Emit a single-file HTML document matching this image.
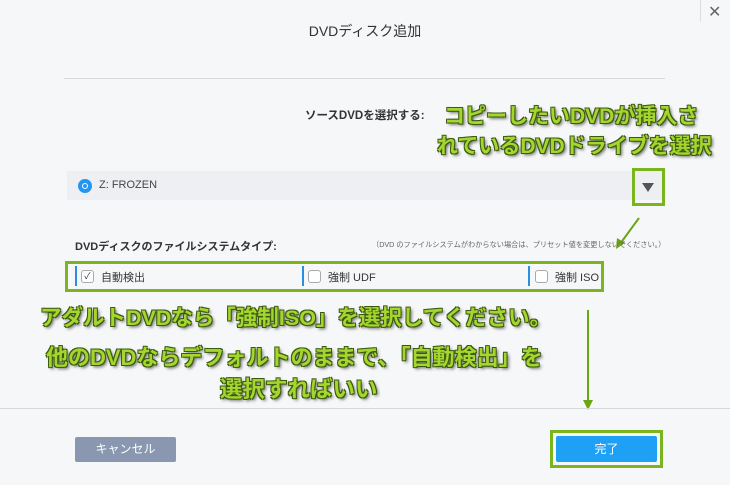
<!DOCTYPE html>
<html><head><meta charset="utf-8"><style>
body{margin:0;width:730px;height:485px;background:#f6f7f9;position:relative;overflow:hidden;font-family:"Liberation Sans","Noto Sans CJK JP",sans-serif;color:#333}
.a{position:absolute;white-space:nowrap}
.g{color:#a5d62e;font-weight:bold;text-shadow:1px 1px 0 #3b5a10,-1px -1px 0 #3b5a10,1px -1px 0 #3b5a10,-1px 1px 0 #3b5a10,2px 2px 3px #555}
.gb{position:absolute;border:3px solid #7ab51d;box-sizing:border-box}
.bar{position:absolute;width:2px;height:20px;background:#2a8fe0;top:266px}
.cb{position:absolute;width:11px;height:11px;border:1px solid #aaa;border-radius:3px;background:#fff;top:270px;font-size:9px;line-height:11px;text-align:center}
</style></head><body>
<div class="a" style="left:700px;top:0;width:1px;height:22px;background:#ddd"></div>
<div class="a" style="left:708px;top:2px;font-size:16px;color:#666">✕</div>
<div class="a" style="left:0;width:730px;top:21px;text-align:center;font-size:14px;color:#333">DVDディスク追加</div>
<div class="a" style="left:64px;top:78px;width:601px;height:1px;background:#d8d8d8"></div>
<div class="a" style="left:305px;top:107px;font-size:11.5px;font-weight:bold">ソースDVDを選択する:</div>
<div class="a g" style="left:444px;top:100px;font-size:21px">コピーしたいDVDが挿入さ</div>
<div class="a g" style="left:437px;top:130px;font-size:21px">れているDVDドライブを選択</div>
<div class="a" style="left:67px;top:171px;width:598px;height:29px;background:#edeff2"></div>
<div class="a" style="left:78px;top:179px;width:14px;height:14px;border-radius:50%;background:#2196f3"></div>
<div class="a" style="left:82px;top:183px;width:4px;height:4px;border:1px solid #fff;border-radius:50%"></div>
<div class="a" style="left:99px;top:179px;font-size:11px;color:#444">Z: FROZEN</div>
<div class="gb" style="left:632px;top:168px;width:33px;height:38px"></div>
<div class="a" style="left:642px;top:183px;width:0;height:0;border-left:6px solid transparent;border-right:6px solid transparent;border-top:9px solid #555"></div>
<svg class="a" style="left:0;top:0" width="730" height="485"><line x1="639" y1="218" x2="620" y2="244" stroke="#6aa512" stroke-width="2"/><polygon points="616,249 617,238 625,243" fill="#6aa512"/><line x1="588" y1="310" x2="588" y2="402" stroke="#6aa512" stroke-width="2"/><polygon points="583,400 593,400 588,410" fill="#6aa512"/></svg>
<div class="a" style="left:75px;top:238px;font-size:11px;font-weight:bold">DVDディスクのファイルシステムタイプ:</div>
<div class="a" style="left:372px;top:240px;font-size:7.2px;color:#666">（DVD のファイルシステムがわからない場合は、プリセット値を変更しないでください。）</div>
<div class="gb" style="left:65px;top:261px;width:539px;height:31px"></div>
<div class="bar" style="left:75px"></div><div class="bar" style="left:302px"></div><div class="bar" style="left:528px"></div>
<div class="cb" style="left:81px">✓</div><div class="cb" style="left:308px"></div><div class="cb" style="left:535px"></div>
<div class="a" style="left:101px;top:269px;font-size:11px">自動検出</div>
<div class="a" style="left:328px;top:269px;font-size:11px">強制 UDF</div>
<div class="a" style="left:555px;top:269px;font-size:11px">強制 ISO</div>
<div class="a g" style="left:40px;top:301px;font-size:21.5px">アダルトDVDなら「強制ISO」を選択してください。</div>
<div class="a g" style="left:46px;top:340px;font-size:22px">他のDVDならデフォルトのままで、「自動検出」を</div>
<div class="a g" style="left:220px;top:372px;font-size:22.5px">選択すればいい</div>
<div class="a" style="left:0;top:408px;width:730px;height:1px;background:#d8d8d8"></div>
<div class="a" style="left:75px;top:437px;width:101px;height:25px;background:#8a97b0;border-radius:2px;color:#fff;font-size:12px;text-align:center;line-height:25px">キャンセル</div>
<div class="gb" style="left:550px;top:430px;width:113px;height:38px"></div>
<div class="a" style="left:556px;top:436px;width:101px;height:26px;background:#1ea1f5;border-radius:2px;color:#fff;font-size:12px;text-align:center;line-height:26px">完了</div>
</body></html>
